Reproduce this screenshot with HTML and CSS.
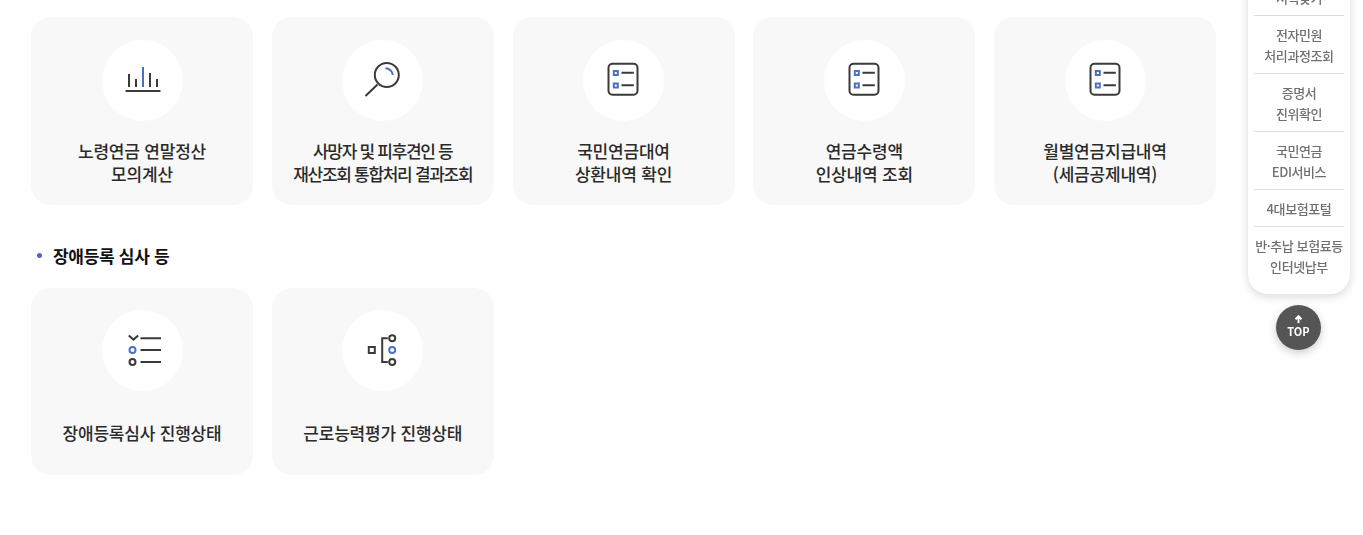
FILE: index.html
```html
<!DOCTYPE html>
<html lang="ko">
<head>
    <meta charset="UTF-8">
    <meta name="viewport" content="width=device-width, initial-scale=1.0">
    <title>조회 서비스</title>
    <link rel="stylesheet" href="styles.css">
</head>
<body>

<div class="content">
    <!-- 연금 조회 -->
    <div class="card-grid">
        <a class="card">
            <span class="icon-circle">
                <svg class="icon" viewBox="0 0 81 81">
                    <path class="line" d="M23.5 51H58.5M27 34V47M34 39V47M48 33V47M55 39V47"/>
                    <path class="line blue" d="M41 27V47"/>
                </svg>
            </span>
            <span class="card-text">노령연금 연말정산<br>모의계산</span>
        </a>
        <a class="card">
            <span class="icon-circle">
                <svg class="icon" viewBox="0 0 81 81">
                    <circle class="line" cx="44.8" cy="35" r="12"/>
                    <path class="line" d="M23.5 56L35.5 44.5"/>
                    <path class="line blue" d="M43.5 28.3A7.5 7.5 0 0 1 50.8 35"/>
                </svg>
            </span>
            <span class="card-text card-text-tight">사망자 및 피후견인 등<br>재산조회 통합처리 결과조회</span>
        </a>
        <a class="card">
            <span class="icon-circle">
                <svg class="icon" viewBox="0 0 81 81">
                    <rect class="line" x="25.5" y="23.7" width="29" height="31" rx="4"/>
                    <rect class="line blue" x="30.8" y="31" width="4" height="4"/>
                    <rect class="line blue" x="30.8" y="43.5" width="4" height="4"/>
                    <path class="line" d="M38.5 32.7H50.8M38.5 45.3H50.8"/>
                </svg>
            </span>
            <span class="card-text">국민연금대여<br>상환내역 확인</span>
        </a>
        <a class="card">
            <span class="icon-circle">
                <svg class="icon" viewBox="0 0 81 81">
                    <rect class="line" x="25.5" y="23.7" width="29" height="31" rx="4"/>
                    <rect class="line blue" x="30.8" y="31" width="4" height="4"/>
                    <rect class="line blue" x="30.8" y="43.5" width="4" height="4"/>
                    <path class="line" d="M38.5 32.7H50.8M38.5 45.3H50.8"/>
                </svg>
            </span>
            <span class="card-text">연금수령액<br>인상내역 조회</span>
        </a>
        <a class="card">
            <span class="icon-circle">
                <svg class="icon" viewBox="0 0 81 81">
                    <rect class="line" x="25.5" y="23.7" width="29" height="31" rx="4"/>
                    <rect class="line blue" x="30.8" y="31" width="4" height="4"/>
                    <rect class="line blue" x="30.8" y="43.5" width="4" height="4"/>
                    <path class="line" d="M38.5 32.7H50.8M38.5 45.3H50.8"/>
                </svg>
            </span>
            <span class="card-text">월별연금지급내역<br>(세금공제내역)</span>
        </a>
    </div>

    <!-- 장애등록 심사 -->
    <h3 class="section-title">장애등록 심사 등</h3>
    <div class="card-grid">
        <a class="card">
            <span class="icon-circle">
                <svg class="icon" viewBox="0 0 81 81">
                    <path class="line" d="M26.8 25.5L31.5 29.6L36.2 25.5M38.5 28.3H59M38.5 40H59M38.5 52H59"/>
                    <circle class="line blue" cx="30.5" cy="40" r="3"/>
                    <circle class="line" cx="30.5" cy="52" r="3"/>
                </svg>
            </span>
            <span class="card-text">장애등록심사 진행상태</span>
        </a>
        <a class="card">
            <span class="icon-circle">
                <svg class="icon" viewBox="0 0 81 81">
                    <rect class="line" x="26.8" y="37" width="6" height="6"/>
                    <path class="line" d="M45.8 28.3H40.2V52H45.8"/>
                    <circle class="line" cx="50.2" cy="28.3" r="3"/>
                    <circle class="line blue" cx="50.2" cy="40" r="3"/>
                    <circle class="line" cx="50.2" cy="52" r="3"/>
                </svg>
            </span>
            <span class="card-text">근로능력평가 진행상태</span>
        </a>
    </div>
</div>

<!-- Floating quick menu -->
<div class="quick">
    <ul class="quick-menu">
        <li>서식찾기</li>
        <li>전자민원<br>처리과정조회</li>
        <li>증명서<br>진위확인</li>
        <li>국민연금<br>EDI서비스</li>
        <li>4대보험포털</li>
        <li>반·추납 보험료등<br>인터넷납부</li>
    </ul>
    <a class="top-button">
        <svg class="top-arrow" viewBox="0 0 9 8">
            <path d="M4.5 8V1.5M1.5 4.2L4.5 1.2L7.5 4.2"/>
        </svg>
        TOP
    </a>
</div>

</body>
</html>
```

FILE: styles.css
```css
* {
    box-sizing: border-box;
}
body {
    margin: 0;
    background-color: #ffffff;
    font-family: "Noto Sans CJK KR", "Noto Sans", sans-serif;
    color: #222222;
    overflow: hidden;
}
.content {
    width: 1185px;
    margin-left: 31px;
    padding-top: 17.3px;
}
.card-grid {
    display: grid;
    grid-template-columns: repeat(5, 222px);
    column-gap: 18.75px;
}
.card {
    display: flex;
    flex-direction: column;
    align-items: center;
    height: 187.5px;
    padding-top: 22.7px;
    background-color: #f8f8f8;
    border-radius: 20px;
}
.icon-circle {
    width: 81px;
    height: 81px;
    border-radius: 50%;
    background-color: #ffffff;
}
.icon {
    display: block;
    width: 81px;
    height: 81px;
}
.line {
    fill: none;
    stroke: #3a3a3a;
    stroke-width: 2;
}
.blue {
    stroke: #4a72c4;
}
.card-text {
    display: flex;
    align-items: center;
    justify-content: center;
    height: 46px;
    margin-top: 18.2px;
    font-size: 17px;
    font-weight: 500;
    line-height: 23px;
    letter-spacing: -0.2px;
    text-align: center;
    color: #2a2a2a;
}
.card-text-tight {
    letter-spacing: -1.3px;
}
.section-title {
    display: flex;
    align-items: center;
    gap: 11px;
    height: 24px;
    margin: 38.7px 0 20.1px 6px;
    font-size: 17px;
    font-weight: 700;
    letter-spacing: -0.3px;
    color: #111111;
}
.section-title::before {
    content: "";
    width: 5px;
    height: 5px;
    border-radius: 50%;
    background-color: #4f68b5;
}

/* Floating quick menu */
.quick {
    position: fixed;
    right: 13px;
    top: -59px;
    display: flex;
    flex-direction: column;
    align-items: center;
    width: 102px;
}
.quick-menu {
    width: 102px;
    margin: 0;
    padding: 0 6px 17px;
    list-style: none;
    background-color: #ffffff;
    border-radius: 0 0 20px 20px;
    box-shadow: 0 3px 10px rgba(0, 0, 0, 0.15);
}
.quick-menu li {
    padding: 8px 0 7px;
    font-size: 13px;
    font-weight: 500;
    line-height: 21px;
    letter-spacing: -0.4px;
    text-align: center;
    white-space: nowrap;
    color: #707070;
    border-bottom: 1px solid #dddddd;
}
.quick-menu li:first-child {
    padding-top: 46px;
}
.quick-menu li:last-child {
    padding-bottom: 0;
    border-bottom: none;
}
.top-button {
    display: flex;
    flex-direction: column;
    align-items: center;
    justify-content: center;
    width: 45px;
    height: 45px;
    margin-top: 11px;
    margin-right: 1px;
    padding-bottom: 3px;
    border-radius: 50%;
    background-color: #555555;
    box-shadow: 0 3px 8px rgba(0, 0, 0, 0.2);
    font-size: 11px;
    font-weight: 700;
    line-height: 13px;
    color: #ffffff;
}
.top-arrow {
    width: 9px;
    height: 8px;
    margin-bottom: 2px;
    fill: none;
    stroke: #ffffff;
    stroke-width: 2;
}
```
